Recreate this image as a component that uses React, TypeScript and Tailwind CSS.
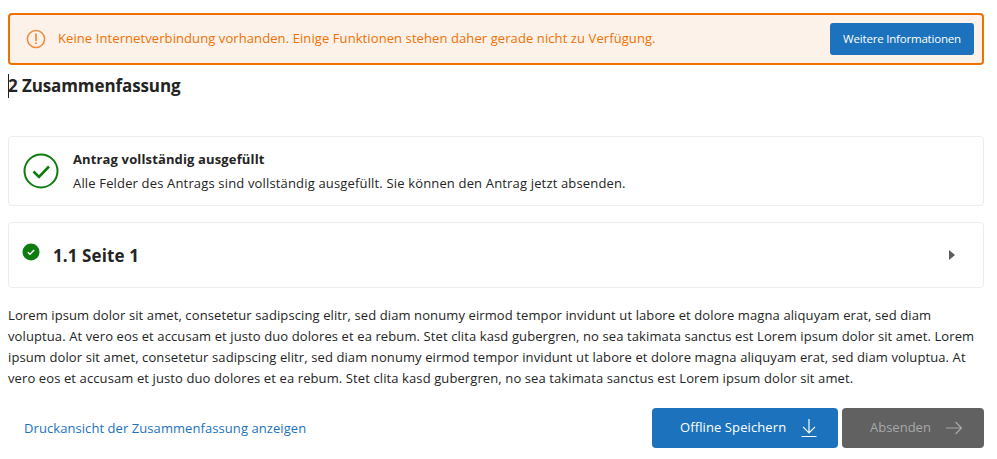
const font = "font-['Open_Sans','Noto_Sans',sans-serif]";

function Alert() {
  return (
    <svg width="20" height="20" viewBox="0 0 20 20" fill="none" stroke="#f08a3c" strokeWidth="1.5">
      <circle cx="10" cy="10" r="8.6" />
      <path d="M10 5.2v6" strokeWidth="1.7" strokeLinecap="round" />
      <circle cx="10" cy="14.2" r="1" fill="#f08a3c" stroke="none" />
    </svg>
  );
}

export default function App() {
  return (
    <div className={`${font} w-[997px] h-[459px] overflow-hidden bg-white pt-[13px] pl-2 pr-[13px] text-[#242424]`}>
      <div className="h-[52px] flex items-center justify-between rounded-[4px] border-2 border-[#f07000] bg-[#fdf2ea] pl-[16px] pr-2">
        <div className="flex items-center gap-[12px] text-[13px] tracking-[0.09px] text-[#f07000]">
          <Alert />
          <span>Keine Internetverbindung vorhanden. Einige Funktionen stehen daher gerade nicht zu Verfügung.</span>
        </div>
        <button className="h-8 w-[144px] rounded-[3px] bg-[#1c72bd] text-[11.5px] tracking-[-0.2px] text-white">Weitere Informationen</button>
      </div>

      <div className="relative mt-[7px] h-[27px]">
        <span className="absolute left-0 top-[2px] h-[24px] w-px bg-[#242424]" />
        <h1 className="text-[17px] leading-[27px] font-bold tracking-[-0.1px]">2 Zusammenfassung</h1>
      </div>

      <div className="mt-[37px] h-[70px] flex items-center gap-[14px] rounded-[4px] border border-[#ececec] pl-[14px]">
        <svg width="36" height="36" viewBox="0 0 36 36" fill="none" stroke="#107c10">
          <circle cx="18" cy="18" r="16.5" strokeWidth="2" />
          <path d="M10.5 18.5l5.5 5.5 10-10.5" strokeWidth="2.6" />
        </svg>
        <div>
          <div className="text-[13px] leading-[20px] font-bold tracking-[0.14px]">Antrag vollständig ausgefüllt</div>
          <div className="mt-[4px] text-[13px] leading-[20px] tracking-[0.16px]">Alle Felder des Antrags sind vollständig ausgefüllt. Sie können den Antrag jetzt absenden.</div>
        </div>
      </div>

      <div className="mt-4 h-[66px] flex justify-between rounded-[4px] border border-[#ececec] pl-[13px] pr-[27px]">
        <div className="flex">
          <svg className="mt-[20px]" width="18" height="18" viewBox="0 0 18 18">
            <circle cx="9" cy="9" r="8.5" fill="#107c10" />
            <path d="M5.8 9.2l2.2 2.1 4.2-4.2" fill="none" stroke="#fff" strokeWidth="1.4" />
          </svg>
          <h2 className="ml-[13px] mt-[20px] text-[17px] leading-[26px] font-bold tracking-[0.1px]">1.1 Seite 1</h2>
        </div>
        <svg className="mt-[26px]" width="8" height="12" viewBox="0 0 8 12">
          <path d="M1 1l6 5-6 5z" fill="#5c5c5c" />
        </svg>
      </div>

      <p className="mt-[17px] text-[13px] leading-[21px] tracking-[0.105px]">
        Lorem ipsum dolor sit amet, consetetur sadipscing elitr, sed diam nonumy eirmod tempor invidunt ut labore et dolore magna aliquyam erat, sed diam voluptua. At vero eos et accusam et justo duo dolores et ea rebum. Stet clita kasd gubergren, no sea takimata sanctus est Lorem ipsum dolor sit amet. Lorem ipsum dolor sit amet, consetetur sadipscing elitr, sed diam nonumy eirmod tempor invidunt ut labore et dolore magna aliquyam erat, sed diam voluptua. At vero eos et accusam et justo duo dolores et ea rebum. Stet clita kasd gubergren, no sea takimata sanctus est Lorem ipsum dolor sit amet.
      </p>

      <div className="mt-[19px] flex items-center">
        <a className="ml-4 pt-[1px] text-[13px] tracking-[0.07px] text-[#1c72bd]">Druckansicht der Zusammenfassung anzeigen</a>
        <button className="ml-auto h-10 w-[186px] flex items-center pl-[28px] gap-[14px] rounded-[4px] bg-[#1c72bd] text-[13px] tracking-[0.1px] text-white">
          Offline Speichern
          <svg width="18" height="20" viewBox="0 0 18 20" fill="none" stroke="#fff" strokeWidth="1.2">
            <path d="M9 1v13.5M3 8.8l6 6 6-6M1.5 18.5h15" />
          </svg>
        </button>
        <button className="ml-1 h-10 w-[142px] flex items-center pl-[28px] gap-[14px] rounded-[4px] bg-[#616161] text-[13px] text-[#a8a8a8]">
          Absenden
          <svg width="18" height="14" viewBox="0 0 18 14" fill="none" stroke="#a8a8a8" strokeWidth="1.2">
            <path d="M1 7h15.5M10.5 1l6 6-6 6" />
          </svg>
        </button>
      </div>
    </div>
  );
}
